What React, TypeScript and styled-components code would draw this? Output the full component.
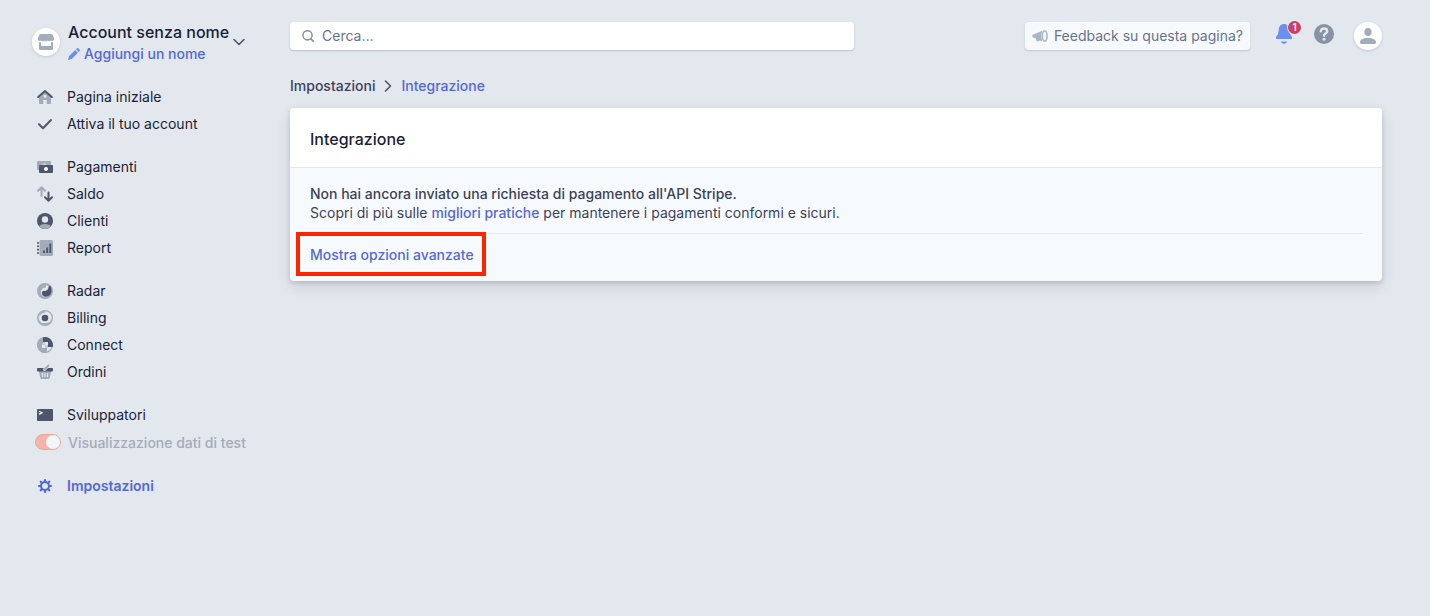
import React from "react";
import styled, { createGlobalStyle, css } from "styled-components";

const c = {
  page: "#e3e8ee",
  ink: "#1a1f36",
  body: "#3c4257",
  grey: "#697386",
  dark: "#4f566b",
  light: "#a3acb9",
  link: "#5469d4",
  blue: "#6c8eef",
};

const GlobalStyle = createGlobalStyle`
  *, *::before, *::after { box-sizing: border-box; }
  body {
    margin: 0;
    background: #e3e7ee;
    color: ${c.ink};
    font-family: Inter, "Liberation Sans", sans-serif;
    font-size: 14px;
    line-height: 19px;
    -webkit-font-smoothing: antialiased;
  }
  button, input { font: inherit; color: inherit; }
  button { border: 0; padding: 0; background: none; cursor: pointer; }
  a { text-decoration: none; color: inherit; }
  svg { display: block; flex: none; }
`;

const Page = styled.div`
  display: flex;
  min-height: 100vh;
`;

const Sidebar = styled.aside`
  flex: none;
  width: 290px;
  padding: 20px 32px 32px;
`;

const Main = styled.main`
  flex: 1;
  min-width: 0;
  padding: 22px 48px 48px 0;
`;

const Account = styled.div`
  display: flex;
  align-items: center;
  height: 44px;
`;

const Disc = styled.span`
  display: flex;
  align-items: center;
  justify-content: center;
  flex: none;
  width: 28px;
  height: 28px;
  border-radius: 50%;
  background: #fff;
  box-shadow: 0 1px 3px rgba(60, 66, 87, 0.18);
`;

const AccountText = styled.div`
  display: flex;
  flex-direction: column;
  margin: 0 4px 0 8px;
  white-space: nowrap;
`;

const AccountName = styled.span`
  font-size: 16px;
  line-height: 24px;
  font-weight: 500;
`;

const RenameLink = styled.a`
  display: flex;
  align-items: center;
  gap: 4px;
  line-height: 20px;
  font-weight: 500;
  color: ${c.link};
`;

const Nav = styled.nav`
  display: flex;
  flex-direction: column;
  gap: 16px;
  padding: 19px 0 0 5px;
`;

const NavGroup = styled.ul`
  margin: 0;
  padding: 0;
  list-style: none;
`;

const NavLink = styled.a<{ $active?: boolean }>`
  display: flex;
  align-items: center;
  gap: 14px;
  height: 27px;
  white-space: nowrap;
  ${(p) =>
    p.$active &&
    css`
      color: ${c.link};
      font-weight: 600;
    `}
`;

const ToggleRow = styled.label`
  display: flex;
  align-items: center;
  gap: 7px;
  height: 28px;
  margin-left: -2px;
  font-weight: 500;
  color: ${c.light};
  white-space: nowrap;
`;

const Toggle = styled.input`
  appearance: none;
  flex: none;
  display: flex;
  justify-content: flex-end;
  width: 26px;
  height: 16px;
  margin: 0;
  border: 1px solid #eba79d;
  border-radius: 8px;
  background: #f3b5a9;
  &::before {
    content: "";
    width: 14px;
    height: 14px;
    border-radius: 50%;
    background: #f3f6f9;
  }
`;

const TopBar = styled.header`
  display: flex;
  align-items: center;
  justify-content: space-between;
  gap: 24px;
  height: 28px;
`;

const Search = styled.label`
  display: flex;
  align-items: center;
  gap: 8px;
  flex: 0 1 564px;
  height: 28px;
  padding: 0 12px;
  border-radius: 4px;
  background: #fff;
  box-shadow: 0 1px 2px rgba(60, 66, 87, 0.24);
`;

const SearchInput = styled.input`
  flex: 1;
  min-width: 0;
  height: 28px;
  padding: 0 0 2px;
  border: 0;
  outline: 0;
  background: none;
  &::placeholder {
    color: ${c.grey};
    opacity: 1;
  }
`;

const Tools = styled.div`
  display: flex;
  align-items: center;
`;

const FeedbackButton = styled.button`
  display: flex;
  align-items: center;
  gap: 6px;
  height: 28px;
  margin-right: 26px;
  padding: 0 7px;
  border-radius: 4px;
  background: #f7fafc;
  box-shadow: 0 1px 2px rgba(60, 66, 87, 0.2);
  color: ${c.grey};
  line-height: 18px;
  white-space: nowrap;
`;

const ToolButton = styled.button`
  position: relative;
  display: flex;
  margin: 0 20px 4px 0;
`;

const Badge = styled.span`
  position: absolute;
  top: -3px;
  right: -7px;
  width: 13px;
  height: 13px;
  border-radius: 50%;
  background: #cd3d64;
  box-shadow: 0 0 0 1px ${c.page};
  color: #fff;
  font-size: 10px;
  line-height: 13px;
  font-weight: 600;
  text-align: center;
`;

const Breadcrumb = styled.nav`
  display: flex;
  align-items: center;
  gap: 9px;
  padding: 26px 0 12px;
  line-height: 20px;
  font-weight: 500;
  color: ${c.body};
`;

const CurrentCrumb = styled.a`
  color: ${c.link};
`;

const Card = styled.section`
  border-radius: 4px;
  background: #f7fafc;
  box-shadow: 0 6px 14px rgba(60, 66, 87, 0.12), 0 2px 5px rgba(0, 0, 0, 0.14);
`;

const CardTitle = styled.h1`
  margin: 0;
  padding: 20px 20px 17px;
  border-bottom: 1px solid #e3e8ee;
  border-radius: 4px 4px 0 0;
  background: #fff;
  font-size: 16px;
  line-height: 22px;
  font-weight: 500;
`;

const CardBody = styled.div`
  padding: 16px 20px 17px;
  color: ${c.body};
`;

const Notice = styled.div`
  padding-bottom: 11px;
  border-bottom: 1px solid #e3e8ee;
`;

const Line = styled.p<{ $strong?: boolean }>`
  margin: 0;
  font-weight: ${(p) => (p.$strong ? 500 : 400)};
`;

const InlineLink = styled.a`
  font-weight: 500;
  color: ${c.link};
`;

const AdvancedButton = styled.button`
  position: relative;
  display: block;
  margin-top: 11px;
  font-weight: 500;
  color: ${c.link};
`;

const Highlight = styled.span`
  position: absolute;
  inset: -13px -12px -12px -14px;
  border: 4px solid #fb2600;
  pointer-events: none;
`;

const Svg = ({ w = 16, h = w, box, children }: { w?: number; h?: number; box?: string; children: React.ReactNode }) => (
  <svg width={w} height={h} viewBox={box ?? `0 0 ${w} ${h}`} fill="none" aria-hidden="true">
    {children}
  </svg>
);

const HomeIcon = () => (
  <Svg>
    <path d="M2 7.5 8 2.5l6 5V14a1 1 0 0 1-1 1H9.700v-4H6.300v4H3a1 1 0 0 1-1-1z" fill={c.light} />
    <rect x="6.600" y="6" width="2.800" height="2.600" rx=".6" fill={c.page} />
    <path d="m1.200 8 6.800-6 6.800 6" stroke={c.dark} strokeWidth="2" strokeLinecap="round" strokeLinejoin="round" />
  </Svg>
);

const CheckIcon = () => (
  <Svg>
    <path d="m2 8.300 4 4 8-8.300" stroke={c.dark} strokeWidth="2" strokeLinecap="round" strokeLinejoin="round" />
  </Svg>
);

const PaymentsIcon = () => (
  <Svg>
    <path d="M1 2h12a1 1 0 0 1 1 1v3H3v5H1a1 1 0 0 1-1-1V3a1 1 0 0 1 1-1z" fill={c.light} />
    <path d="M5.500 6a2 2 0 0 1 3.500-1v1z" fill={c.page} opacity=".7" />
    <rect x="2" y="6" width="14" height="8" rx="1" fill={c.dark} />
    <circle cx="9" cy="10" r="2" fill="#fff" />
  </Svg>
);

const BalanceIcon = () => (
  <Svg>
    <path d="M4.500 10V1.500M1 4.800l3.500-3.500L8 4.800" stroke={c.light} strokeWidth="2" strokeLinecap="round" strokeLinejoin="round" />
    <path d="M11.500 6.500v8M8 11.300l3.500 3.500 3.500-3.500" stroke={c.dark} strokeWidth="2" strokeLinecap="round" strokeLinejoin="round" />
  </Svg>
);

const CustomersIcon = () => (
  <Svg>
    <circle cx="8" cy="8" r="8" fill={c.dark} />
    <circle cx="8" cy="6.500" r="3.200" fill={c.page} />
    <path d="M2 13.300c1.500-1.400 3.500-2.300 6-2.300s4.500.9 6 2.300A8 8 0 0 1 8 16a8 8 0 0 1-6-2.700z" fill={c.light} />
  </Svg>
);

const ReportIcon = () => (
  <Svg>
    <rect x="2.500" width="13.500" height="16" rx="1.500" fill={c.light} />
    <path d="M0 3h2M0 6.300h2M0 9.600h2M0 13h2" stroke={c.dark} strokeWidth="1.600" />
    <path d="M7 10.500V13M10.200 7.500V13M13.300 3.500V13" stroke={c.dark} strokeWidth="1.900" />
  </Svg>
);

const RadarIcon = () => (
  <Svg>
    <circle cx="8" cy="8" r="7" fill={c.page} stroke={c.light} strokeWidth="2" />
    <path d="M1 8a7 7 0 0 0 7 7c-2.500-1-4-3-4-5.500C4 6 6 4.500 9 4.500 8.500 3 9 2 10 1.300A7 7 0 0 0 1 8z" fill={c.light} />
    <path d="M13.200 2.800A7 7 0 0 1 14.500 8c0 3.500-2.700 5.700-5.700 5.700-2.300 0-3.900-1.500-3.900-3.500 0-1.300.8-2.200 1.600-2.600 2 .9 5.200-.4 5.200-4.300z" fill={c.dark} />
    <circle cx="7.400" cy="6.700" r="1.400" fill={c.page} />
  </Svg>
);

const BillingIcon = () => (
  <Svg>
    <circle cx="8" cy="8" r="7.400" fill={c.page} stroke={c.light} strokeWidth="1.200" />
    <path d="M.8 8A7.200 7.200 0 0 0 15.200 8 7 7 0 0 1 8 13 5.500 5.500 0 0 1 3.500 3.500 7 7 0 0 0 .8 8z" fill={c.light} />
    <path d="M2.500 3.500A8 8 0 0 1 8 0v2.500A5.500 5.500 0 0 0 2.500 8z" fill={c.light} />
    <circle cx="8" cy="8" r="3.300" fill={c.dark} />
  </Svg>
);

const ConnectIcon = () => (
  <Svg>
    <circle cx="8" cy="8" r="7.400" fill={c.page} stroke={c.light} strokeWidth="1.200" />
    <path d="M6 .3V6H.3A8 8 0 0 1 6 .3z" fill={c.light} />
    <path d="M.3 6H5v5h5v4.700A8 8 0 0 1 .3 6z" fill={c.light} />
    <path d="M6 .3A8 8 0 0 1 15.700 10H11V5H6z" fill={c.dark} />
    <path d="M5 5h3v3H5zM8 8h3v3H8z" fill={c.light} opacity=".5" />
  </Svg>
);

const OrdersIcon = () => (
  <Svg>
    <path d="M1.800 7h12.400l-1.500 7a1.300 1.300 0 0 1-1.300 1H4.600a1.300 1.300 0 0 1-1.300-1z" fill={c.light} />
    <path d="M5.300 9.300l.3 3.200M8 9.300v3.200M10.700 9.300l-.3 3.200" stroke={c.page} strokeWidth="1.200" strokeLinecap="round" />
    <path d="M1 4h14a1 1 0 0 1 1 1v1.500a1 1 0 0 1-1 1H1a1 1 0 0 1-1-1V5a1 1 0 0 1 1-1z" fill={c.dark} />
    <path d="m7.500 5.500 4-4" stroke={c.page} strokeWidth="3" strokeLinecap="round" />
    <path d="m7.500 5.500 4-4" stroke={c.light} strokeWidth="1.800" strokeLinecap="round" />
  </Svg>
);

const DevelopersIcon = () => (
  <Svg>
    <rect y="2" width="16" height="12" rx="1" fill={c.dark} />
    <path d="m2 4.200 3 1.600-3 1.600" stroke="#fff" strokeWidth="1.200" />
  </Svg>
);

const GearIcon = () => (
  <Svg>
    <circle cx="8" cy="8" r="4" stroke={c.link} strokeWidth="2" />
    {[0, 45, 90, 135, 180, 225, 270, 315].map((a) => (
      <path key={a} d="M8 3.800V2" stroke={c.link} strokeWidth="2.200" strokeLinecap="round" transform={`rotate(${a} 8 8)`} />
    ))}
  </Svg>
);

const StoreIcon = () => (
  <Svg>
    <path d="M3 0h10a2 2 0 0 1 1.800 1.100L16 4v1a2 2 0 0 1-3.200 1.500 2 2 0 0 1-3.200 0 2 2 0 0 1-3.200 0 2 2 0 0 1-3.200 0A2 2 0 0 1 0 5V4l1.200-2.900A2 2 0 0 1 3 0z" fill={c.light} />
    <path d="M1 8.200c.8.200 1.500.2 2 0V12h10V8.200c.5.200 1.200.2 2 0V15a1 1 0 0 1-1 1H2a1 1 0 0 1-1-1z" fill={c.light} />
  </Svg>
);

const PencilIcon = () => (
  <Svg w={12}>
    <path d="m0 12 .9-3.700L7.200 2 10 4.800l-6.300 6.300zM8 1.200 8.900.3a1 1 0 0 1 1.400 0l1.400 1.400a1 1 0 0 1 0 1.400l-.9.900z" fill={c.blue} />
  </Svg>
);

const ChevronDown = () => (
  <Svg w={12} h={8}>
    <path d="m1 1.500 5 5 5-5" stroke={c.dark} strokeWidth="1.600" strokeLinecap="round" strokeLinejoin="round" />
  </Svg>
);

const ChevronRight = () => (
  <Svg w={8} h={12}>
    <path d="m1.500 1 5 5-5 5" stroke={c.dark} strokeWidth="1.600" strokeLinecap="round" strokeLinejoin="round" />
  </Svg>
);

const SearchIcon = () => (
  <Svg w={12}>
    <circle cx="5.500" cy="5.300" r="4.600" stroke="#8792a2" strokeWidth="1.500" />
    <path d="m8.800 8.800 2.700 2.600" stroke="#8792a2" strokeWidth="1.600" strokeLinecap="round" />
  </Svg>
);

const MegaphoneIcon = () => (
  <Svg>
    <path d="M1.300 6.400 10.300 2.800c-1.200 2.700-1.200 7.700 0 10.400L7.800 12.200l-.8 1a1 1 0 0 1-1.200.2l-1.600-.8-.3-2-2.600-1A1.700 1.700 0 0 1 1.300 6.400z" fill="#a9b7c5" />
    <ellipse cx="12.700" cy="8" rx="2.300" ry="5" stroke="#a9b7c5" strokeWidth="1.500" />
  </Svg>
);

const BellIcon = () => (
  <Svg w={18} h={20}>
    <path d="M8 0c3.300 0 5 2.400 5.200 5.500.2 3 .8 5 2.300 6.800.9 1 .6 2.700-.7 2.700H1.200C-.1 15-.4 13.300.5 12.300 2 10.500 2.600 8.500 2.800 5.500 3 2.400 4.700 0 8 0z" fill={c.blue} />
    <path d="M5 17.600h6c-.3 1.300-1.500 2.200-3 2.200s-2.700-.9-3-2.200z" fill={c.blue} />
  </Svg>
);

const HelpIcon = () => (
  <Svg w={20}>
    <circle cx="10" cy="10" r="10" fill="#8792a2" />
    <path d="M6.800 7.200C6.800 5.500 8.200 4.500 10 4.500s3.200 1 3.200 2.700c0 2.300-3.100 2.200-3.100 4.300" stroke={c.page} strokeWidth="2.500" strokeLinecap="round" />
    <circle cx="10" cy="15.200" r="1.500" fill={c.page} />
  </Svg>
);

const PersonIcon = () => (
  <Svg>
    <ellipse cx="8" cy="4" rx="3.600" ry="4" fill={c.light} />
    <path d="M0 14.500C0 11.500 2.500 10 8 10s8 1.500 8 4.500a1.500 1.500 0 0 1-1.500 1.500h-13A1.500 1.500 0 0 1 0 14.500z" fill={c.light} />
  </Svg>
);

type Item = { label: string; Icon: () => React.JSX.Element };

const groups: Item[][] = [
  [
    { label: "Pagina iniziale", Icon: HomeIcon },
    { label: "Attiva il tuo account", Icon: CheckIcon },
  ],
  [
    { label: "Pagamenti", Icon: PaymentsIcon },
    { label: "Saldo", Icon: BalanceIcon },
    { label: "Clienti", Icon: CustomersIcon },
    { label: "Report", Icon: ReportIcon },
  ],
  [
    { label: "Radar", Icon: RadarIcon },
    { label: "Billing", Icon: BillingIcon },
    { label: "Connect", Icon: ConnectIcon },
    { label: "Ordini", Icon: OrdersIcon },
  ],
];

const NavItem = ({ label, Icon, active }: Item & { active?: boolean }) => (
  <li>
    <NavLink href="#" $active={active} aria-current={active ? "page" : undefined}>
      <Icon />
      {label}
    </NavLink>
  </li>
);

export default function App() {
  return (
    <>
      <GlobalStyle />
      <Page>
        <Sidebar>
          <Account>
            <Disc>
              <StoreIcon />
            </Disc>
            <AccountText>
              <AccountName>Account senza nome</AccountName>
              <RenameLink href="#">
                <PencilIcon />
                Aggiungi un nome
              </RenameLink>
            </AccountText>
            <button type="button" aria-label="Cambia account">
              <ChevronDown />
            </button>
          </Account>
          <Nav>
            {groups.map((items) => (
              <NavGroup key={items[0].label}>
                {items.map((item) => (
                  <NavItem key={item.label} {...item} />
                ))}
              </NavGroup>
            ))}
            <NavGroup>
              <NavItem label="Sviluppatori" Icon={DevelopersIcon} />
              <li>
                <ToggleRow>
                  <Toggle type="checkbox" role="switch" defaultChecked />
                  Visualizzazione dati di test
                </ToggleRow>
              </li>
            </NavGroup>
            <NavGroup>
              <NavItem label="Impostazioni" Icon={GearIcon} active />
            </NavGroup>
          </Nav>
        </Sidebar>
        <Main>
          <TopBar>
            <Search>
              <SearchIcon />
              <SearchInput type="text" placeholder="Cerca…" aria-label="Cerca" />
            </Search>
            <Tools>
              <FeedbackButton type="button">
                <MegaphoneIcon />
                Feedback su questa pagina?
              </FeedbackButton>
              <ToolButton type="button" aria-label="Notifiche">
                <BellIcon />
                <Badge>1</Badge>
              </ToolButton>
              <ToolButton type="button" aria-label="Aiuto">
                <HelpIcon />
              </ToolButton>
              <button type="button" aria-label="Profilo">
                <Disc>
                  <PersonIcon />
                </Disc>
              </button>
            </Tools>
          </TopBar>
          <Breadcrumb aria-label="Percorso">
            <a href="#">Impostazioni</a>
            <ChevronRight />
            <CurrentCrumb href="#">Integrazione</CurrentCrumb>
          </Breadcrumb>
          <Card>
            <CardTitle>Integrazione</CardTitle>
            <CardBody>
              <Notice>
                <Line $strong>Non hai ancora inviato una richiesta di pagamento all'API Stripe.</Line>
                <Line>
                  Scopri di più sulle <InlineLink href="#">migliori pratiche</InlineLink> per mantenere i pagamenti
                  conformi e sicuri.
                </Line>
              </Notice>
              <AdvancedButton type="button">
                Mostra opzioni avanzate
                <Highlight />
              </AdvancedButton>
            </CardBody>
          </Card>
        </Main>
      </Page>
    </>
  );
}
